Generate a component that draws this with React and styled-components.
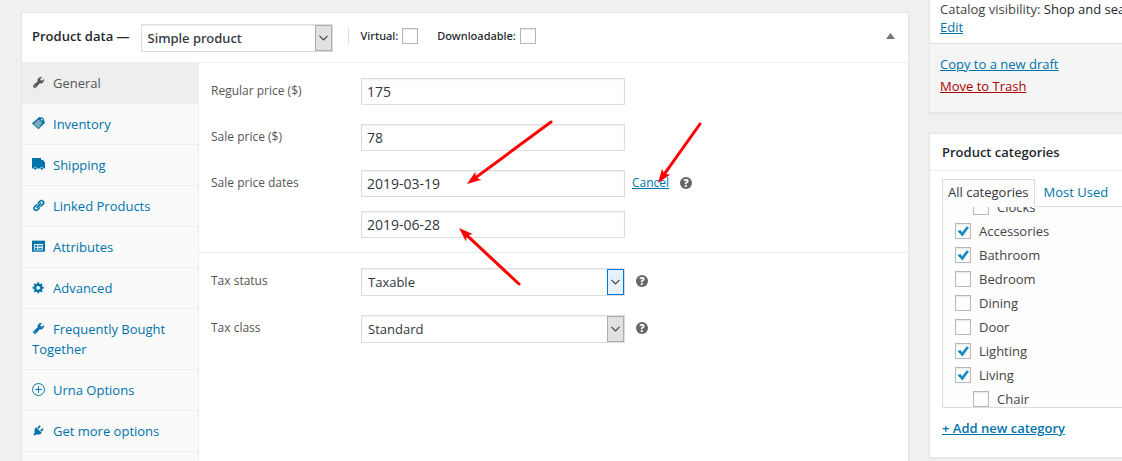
import React from 'react';
import styled, { createGlobalStyle } from 'styled-components';

const Global = createGlobalStyle`
  * { box-sizing: border-box; }
  body {
    margin: 0;
    background: #f0f0f0;
    color: #444;
    font: 13px/20px "Open Sans", "Noto Sans", sans-serif;
    overflow: hidden;
  }
  input, select, button { font: inherit; color: inherit; }
  ul { list-style: none; margin: 0; padding: 0; }
  h2 { margin: 0; font-size: 13px; font-weight: 600; color: #23282d; }
`;

const Page = styled.div`
  position: relative;
  display: grid;
  grid-template-columns: minmax(0, 1fr) 193px;
  gap: 20px;
  height: 100vh;
  padding-left: 21px;
  overflow: hidden;
`;

const Panel = styled.section`
  display: flex;
  flex-direction: column;
  margin-top: 12px;
  background: #fff;
  border: 1px solid #e5e5e5;
  border-bottom: 0;
`;

const PanelHeader = styled.header`
  display: flex;
  align-items: center;
  height: 50px;
  padding: 0 13px 4px 10px;
  border-bottom: 1px solid #eee;
  color: #23282d;
`;

const TypeField = styled.div`
  margin: 4px 15px 0 11px;
`;

const Flags = styled.div`
  display: flex;
  gap: 19px;
  padding-left: 12px;
  border-left: 1px solid #ddd;
  height: 16px;
  align-items: center;
`;

const FlagLabel = styled.label`
  display: flex;
  align-items: center;
  gap: 4px;
  font-family: "Noto Sans", sans-serif;
  font-size: 11px;
  font-weight: 500;
  line-height: 16px;
`;

const Toggle = styled.button`
  display: flex;
  margin-left: auto;
  padding: 0;
  border: 0;
  background: none;
  color: #72777c;
`;

const Check = styled.input`
  appearance: none;
  flex: none;
  width: 16px;
  height: 16px;
  margin: 0;
  border: 1px solid #b4b9be;
  background: #fff;
  box-shadow: inset 0 1px 2px rgba(0, 0, 0, 0.1);
  &:checked {
    background: #fff url("data:image/svg+xml,%3Csvg xmlns='http://www.w3.org/2000/svg' viewBox='0 0 14 14'%3E%3Cpath d='M1.6 7.6 4 5.700 6.200 8 10.800 2.200 13 3.600 6.500 12.600z' fill='%231e8cbe'/%3E%3C/svg%3E") center / 14px 14px no-repeat;
  }
`;

const PanelBody = styled.div`
  display: flex;
  flex: 1;
`;

const Nav = styled.ul`
  flex: none;
  width: 177px;
  background: #fafafa;
  border-right: 1px solid #eee;
`;

const NavLink = styled.a`
  display: block;
  padding: 10px;
  border-bottom: 1px solid #eee;
  color: ${(p) => (p.$active ? '#555' : '#0073aa')};
  background: ${(p) => (p.$active ? '#eee' : 'transparent')};
  text-decoration: none;
  svg { margin-right: 8px; vertical-align: -1px; }
`;

const Form = styled.form`
  flex: 1;
  font-size: 12px;
`;

const Group = styled.div`
  display: flex;
  flex-direction: column;
  gap: 19px;
  padding: 15px 12px 14px;
  & + & { border-top: 1px solid #eee; }
`;

const Row = styled.div`
  display: flex;
  align-items: flex-start;
`;

const RowLabel = styled.label`
  width: 150px;
  line-height: 26px;
  color: #555;
`;

const DateStack = styled.div`
  display: flex;
  flex-direction: column;
  gap: 14px;
`;

const TextBox = styled.input`
  display: block;
  width: 264px;
  height: 27px;
  padding: 0 5px;
  border: 1px solid #ddd;
  background: #fff;
  box-shadow: inset 0 1px 2px rgba(0, 0, 0, 0.07);
  color: #32373c;
  font-size: 14px;
`;

const SelectWrap = styled.div`
  display: grid;
  width: ${(p) => p.$width}px;
  height: 28px;
  color: #32373c;
  font-family: ${(p) => (p.$strong ? '"Noto Sans", sans-serif' : 'inherit')};
  font-size: 13px;
  font-weight: ${(p) => (p.$strong ? 500 : 400)};
  > * { grid-area: 1 / 1; }
`;

const SelectBox = styled.select`
  appearance: none;
  padding: 0 26px 0 6px;
  border: 1px solid #ddd;
  border-radius: 0;
  background: #fff;
  box-shadow: inset 0 1px 2px rgba(0, 0, 0, 0.07);
`;

const SelectArrow = styled.span`
  display: flex;
  align-items: center;
  justify-content: center;
  justify-self: end;
  width: 17px;
  margin: 1px;
  border: 1px solid ${(p) => (p.$hot ? '#0078d7' : '#adadad')};
  background: ${(p) => (p.$hot ? '#e5f1fb' : '#e1e1e1')};
  pointer-events: none;
`;

const Cancel = styled.a`
  margin-left: 7px;
  line-height: 26px;
  color: #0073aa;
`;

const Help = styled.span`
  display: flex;
  align-items: center;
  justify-content: center;
  width: 12px;
  height: 12px;
  margin: 7px 0 0 11px;
  border-radius: 50%;
  background: #666;
  color: #fff;
  font-size: 10px;
  font-weight: 800;
  line-height: 12px;
`;

const Side = styled.aside`
  display: flex;
  flex-direction: column;
  gap: 20px;
  min-width: 0;
  white-space: nowrap;
`;

const SideBox = styled.section`
  border: 1px solid #e5e5e5;
  border-right: 0;
  background: #fff;
  box-shadow: 0 1px 1px rgba(0, 0, 0, 0.04);
  overflow: hidden;
  &:first-child { border-top: 0; }
`;

const Visibility = styled.div`
  padding: 0 10px 7px;
  line-height: 18px;
  b { font-weight: 500; color: #23282d; }
  a { display: block; }
`;

const Link = styled.a`
  color: ${(p) => (p.$danger ? '#a00' : '#0073aa')};
  font-weight: ${(p) => (p.$strong ? 600 : 400)};
`;

const Actions = styled.div`
  display: flex;
  flex-direction: column;
  align-items: flex-start;
  gap: 2px;
  padding: 10px 10px 16px;
  border-top: 1px solid #ddd;
  background: #f5f5f5;
`;

const SideHeader = styled.header`
  padding: 8px 12px;
  border-bottom: 1px solid #eee;
`;

const Categories = styled.div`
  padding: 8px 0 19px 12px;
`;

const Tabs = styled.div`
  display: flex;
  position: relative;
  margin-bottom: -1px;
`;

const Tab = styled.button`
  height: 28px;
  padding: 0 5px 2px;
  border: 1px solid ${(p) => (p.$active ? '#ddd' : 'transparent')};
  border-bottom-color: ${(p) => (p.$active ? '#fdfdfd' : 'transparent')};
  background: ${(p) => (p.$active ? '#fdfdfd' : 'none')};
  color: ${(p) => (p.$active ? '#32373c' : '#0073aa')};
  & + & { margin-left: 3px; }
`;

const CategoryList = styled.ul`
  display: flex;
  flex-direction: column;
  justify-content: flex-end;
  gap: 8px;
  height: 202px;
  margin-bottom: 10px;
  padding-left: 12px;
  border: 1px solid #ddd;
  border-right: 0;
  background: #fdfdfd;
  overflow: hidden;
`;

const CategoryLabel = styled.label`
  display: flex;
  align-items: center;
  gap: 8px;
  margin-left: ${(p) => (p.$nested ? 18 : 0)}px;
  line-height: 16px;
`;

const Overlay = styled.svg`
  position: absolute;
  left: 0;
  top: 0;
  pointer-events: none;
`;

const linkHalf =
  'M17.74 2.76c1.68 1.69 1.68 4.41 0 6.1l-1.53 1.52c-1.12 1.12-2.7 1.47-4.14 1.09l2.62-2.61.76-.77.76-.76c.84-.84.84-2.2 0-3.04-.84-.85-2.2-.85-3.04 0l-.77.76-3.38 3.38c-.37-1.44-.02-3.02 1.1-4.14l1.52-1.53c1.69-1.68 4.42-1.68 6.1 0z';

const icons = {
  wrench: (
    <path d="M16.68 9.77c-1.34 1.34-3.3 1.67-4.95.99l-5.41 6.52c-.99.99-2.59.99-3.58 0s-.99-2.59 0-3.57l6.52-5.42c-.68-1.65-.35-3.61.99-4.95 1.28-1.28 3.12-1.62 4.72-1.06l-2.89 2.89 2.82 2.82 2.86-2.87c.53 1.58.18 3.39-1.08 4.65zM3.81 16.21c.4.39 1.04.39 1.43 0 .4-.4.4-1.04 0-1.43-.39-.4-1.03-.4-1.43 0-.39.39-.39 1.03 0 1.43z" stroke="currentColor" strokeWidth="0.800" />
  ),
  tag: (
    <>
      <path d="M11 0 17 1 20 9 10 19 0 10z" />
      <path d="M10 4 16 9l-6 8-7-6z" fill="#9fb4c0" />
      <path d="m7 7 6 5M5 9.500l6 5M9 5l6 5M12.500 6 6 13M15 8l-6 7" stroke="#4a8db0" strokeWidth="0.800" />
      <circle cx="15" cy="4" r="1.300" fill="#fafafa" />
    </>
  ),
  truck: (
    <>
      <path d="M0 0h14v3h3l3 4v9H0z" />
      <circle cx="5" cy="16" r="2.600" fill="#fafafa" />
      <circle cx="15" cy="16" r="2.600" fill="#fafafa" />
      <circle cx="5" cy="16" r="1.900" />
      <circle cx="15" cy="16" r="1.900" />
    </>
  ),
  link: (
    <g stroke="currentColor" strokeWidth="0.600">
      <path d={linkHalf} />
      <path d={linkHalf} transform="rotate(180 10.5 10)" />
      <path d="M8.590 13.430l5.340-5.340c.42-.42.42-1.100 0-1.520-.44-.43-1.130-.39-1.530 0l-5.330 5.340c-.42.42-.42 1.100 0 1.520.44.43 1.130.39 1.520 0z" />
    </g>
  ),
  table: (
    <>
      <path d="M0 1h20v17H0z" />
      <path d="M3 6h14v10H3z" fill="#dcebf2" />
      <path d="M4.500 7.500h3.500v3h-3.500zM4.500 12h3.500v3h-3.500zM9.500 8h6.500v2h-6.500zM9.500 12.500h6.500v2h-6.500z" />
    </>
  ),
  gear: (
    <path d="M18 12h-2.180c-.17.7-.44 1.350-.81 1.930l1.540 1.540-2.100 2.100-1.540-1.540c-.58.36-1.230.63-1.910.79V19H8v-2.180c-.68-.16-1.330-.43-1.910-.79l-1.540 1.540-2.120-2.120 1.540-1.540c-.36-.58-.63-1.230-.79-1.910H1V9.030h2.170c.16-.7.44-1.350.8-1.940L2.430 5.550l2.100-2.100 1.540 1.540c.58-.37 1.240-.64 1.930-.81V2h3v2.180c.68.16 1.330.43 1.910.79l1.540-1.540 2.120 2.120-1.540 1.540c.36.59.64 1.240.8 1.940H18V12zm-8.500 1.500c1.660 0 3-1.340 3-3s-1.340-3-3-3-3 1.340-3 3 1.340 3 3 3z" />
  ),
  plus: (
    <g fill="none" stroke="currentColor" strokeWidth="1.500">
      <circle cx="10" cy="10" r="9.200" />
      <path d="M10 5v10M5 10h10" />
    </g>
  ),
  plug: (
    <path d="M13.110 4.360L9.870 7.600 8 5.730l3.240-3.240c.35-.34 1.050-.2 1.560.32.52.51.66 1.210.31 1.550zm-8 1.770l.91-1.120 9.010 9.010-1.190.84c-.71.71-2.630 1.160-3.820 1.160H6.140L4.900 17.260c-.59.59-1.540.59-2.120 0-.59-.58-.59-1.530 0-2.120l1.240-1.240v-3.880c0-1.130.4-3.190 1.090-3.890zm7.260 3.970l3.240-3.240c.34-.35 1.040-.21 1.550.31.52.51.66 1.210.31 1.550l-3.240 3.250z" />
  ),
};

function Icon({ name }) {
  return (
    <svg width="13" height="13" viewBox="0 0 20 20" fill="currentColor" aria-hidden="true">
      {icons[name]}
    </svg>
  );
}

const navItems = [
  ['wrench', 'General'],
  ['tag', 'Inventory'],
  ['truck', 'Shipping'],
  ['link', 'Linked Products'],
  ['table', 'Attributes'],
  ['gear', 'Advanced'],
  ['wrench', 'Frequently Bought Together'],
  ['plus', 'Urna Options'],
  ['plug', 'Get more options'],
];

const categories = [
  { name: 'Clocks', nested: true },
  { name: 'Accessories', checked: true },
  { name: 'Bathroom', checked: true },
  { name: 'Bedroom' },
  { name: 'Dining' },
  { name: 'Door' },
  { name: 'Lighting', checked: true },
  { name: 'Living', checked: true },
  { name: 'Chair', nested: true },
];

function Select({ id, label, value, width, strong, hot }) {
  return (
    <SelectWrap $width={width} $strong={strong}>
      <SelectBox id={id} aria-label={label} defaultValue={value}>
        <option>{value}</option>
      </SelectBox>
      <SelectArrow $hot={hot}>
        <svg width="9" height="6" viewBox="0 0 9 6" fill="none" stroke="#444" strokeWidth="1.2">
          <path d="M.5.8 4.500 4.800 8.500.8" />
        </svg>
      </SelectArrow>
    </SelectWrap>
  );
}

function Arrow({ from, to }) {
  const angle = Math.atan2(to[1] - from[1], to[0] - from[0]);
  const length = Math.hypot(to[0] - from[0], to[1] - from[1]);
  return (
    <g transform={`translate(${from[0]} ${from[1]}) rotate(${(angle * 180) / Math.PI})`}>
      <path d={`M0 0H${length - 9}`} stroke="#f00" strokeWidth="3" strokeLinecap="round" />
      <path d={`M${length} 0l-14-5 3 5-3 5z`} fill="#f00" />
    </g>
  );
}

export default function App() {
  return (
    <>
      <Global />
      <Page>
        <Panel>
          <PanelHeader>
            <h2>Product data —</h2>
            <TypeField>
              <Select label="Product type" value="Simple product" width={192} strong />
            </TypeField>
            <Flags>
              <FlagLabel>Virtual: <Check type="checkbox" /></FlagLabel>
              <FlagLabel>Downloadable: <Check type="checkbox" /></FlagLabel>
            </Flags>
            <Toggle type="button" aria-label="Toggle panel">
              <svg width="9" height="6" viewBox="0 0 9 6" fill="currentColor"><path d="M4.500 0 9 6H0z" /></svg>
            </Toggle>
          </PanelHeader>
          <PanelBody>
            <Nav>
              {navItems.map(([icon, text], i) => (
                <li key={text}>
                  <NavLink href="#" $active={i === 0}><Icon name={icon} />{text}</NavLink>
                </li>
              ))}
            </Nav>
            <Form>
              <Group>
                <Row>
                  <RowLabel htmlFor="regular">Regular price ($)</RowLabel>
                  <TextBox id="regular" defaultValue="175" />
                </Row>
                <Row>
                  <RowLabel htmlFor="sale">Sale price ($)</RowLabel>
                  <TextBox id="sale" defaultValue="78" />
                </Row>
                <Row>
                  <RowLabel htmlFor="from">Sale price dates</RowLabel>
                  <DateStack>
                    <TextBox id="from" defaultValue="2019-03-19" />
                    <TextBox aria-label="Sale end date" defaultValue="2019-06-28" />
                  </DateStack>
                  <Cancel href="#">Cancel</Cancel>
                  <Help>?</Help>
                </Row>
              </Group>
              <Group>
                <Row>
                  <RowLabel htmlFor="status">Tax status</RowLabel>
                  <Select id="status" value="Taxable" width={264} hot />
                  <Help>?</Help>
                </Row>
                <Row>
                  <RowLabel htmlFor="class">Tax class</RowLabel>
                  <Select id="class" value="Standard" width={264} />
                  <Help>?</Help>
                </Row>
              </Group>
            </Form>
          </PanelBody>
        </Panel>
        <Side>
          <SideBox>
            <Visibility>
              Catalog visibility: <b>Shop and search results</b>
              <Link href="#">Edit</Link>
            </Visibility>
            <Actions>
              <Link href="#">Copy to a new draft</Link>
              <Link href="#" $danger>Move to Trash</Link>
            </Actions>
          </SideBox>
          <SideBox>
            <SideHeader><h2>Product categories</h2></SideHeader>
            <Categories>
              <Tabs>
                <Tab type="button" $active>All categories</Tab>
                <Tab type="button">Most Used</Tab>
              </Tabs>
              <CategoryList>
                {categories.map((c) => (
                  <li key={c.name}>
                    <CategoryLabel $nested={c.nested}>
                      <Check type="checkbox" defaultChecked={c.checked} />
                      {c.name}
                    </CategoryLabel>
                  </li>
                ))}
              </CategoryList>
              <Link href="#" $strong>+ Add new category</Link>
            </Categories>
          </SideBox>
        </Side>
        <Overlay width="720" height="300" aria-hidden="true">
          <Arrow from={[551, 122]} to={[467, 184]} />
          <Arrow from={[700, 124]} to={[658, 183]} />
          <Arrow from={[519, 284]} to={[459, 228]} />
        </Overlay>
      </Page>
    </>
  );
}
